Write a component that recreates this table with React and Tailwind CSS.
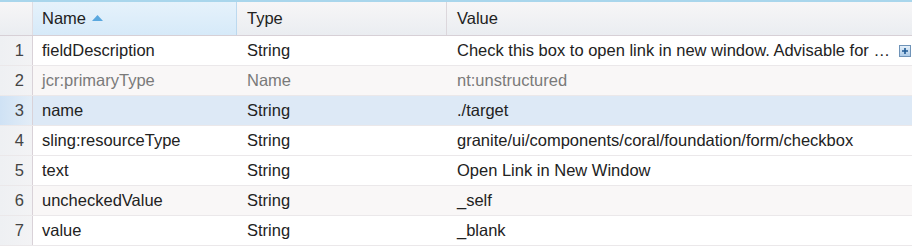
const rows = [
  { n: 1, name: 'fieldDescription', type: 'String', value: 'Check this box to open link in new window. Advisable for …', expand: true },
  { n: 2, name: 'jcr:primaryType', type: 'Name', value: 'nt:unstructured', muted: true },
  { n: 3, name: 'name', type: 'String', value: './target', selected: true },
  { n: 4, name: 'sling:resourceType', type: 'String', value: 'granite/ui/components/coral/foundation/form/checkbox' },
  { n: 5, name: 'text', type: 'String', value: 'Open Link in New Window' },
  { n: 6, name: 'uncheckedValue', type: 'String', value: '_self', alt: true },
  { n: 7, name: 'value', type: 'String', value: '_blank' },
];

function ExpandIcon() {
  return (
    <svg width="12" height="12" viewBox="0 0 12 12" className="shrink-0">
      <defs>
        <linearGradient id="eg" x1="0" y1="0" x2="0" y2="1">
          <stop offset="0" stopColor="#e8f2fb" />
          <stop offset="1" stopColor="#a9c8e6" />
        </linearGradient>
      </defs>
      <rect x="0.5" y="0.5" width="11" height="11" fill="url(#eg)" stroke="#6f93b8" />
      <path d="M6 3v6M3 6h6" stroke="#1f5a94" strokeWidth="1.6" />
    </svg>
  );
}

function Row({ row }) {
  let bg = 'bg-white';
  if (row.selected) bg = 'bg-[#dde9f6]';
  else if (row.muted || row.alt) bg = 'bg-[#f9f7f7]';
  const text = row.muted ? 'text-[#7a7a7a]' : 'text-[#222]';
  return (
    <div className={`flex h-[30px] border-b border-[#ebe8ea] ${bg} ${text}`}>
      <div
        className={`w-[33px] shrink-0 flex items-center justify-end pr-[8px] border-r border-[#d9d2d8] text-[#444] ${
          row.selected ? 'bg-gradient-to-r from-[#cfe2f5] to-[#e3edf7]' : 'bg-gradient-to-r from-[#eef0f3] to-[#f3f3f5]'
        }`}
      >
        {row.n}
      </div>
      <div className="w-[204px] shrink-0 flex items-center pl-[9px]">{row.name}</div>
      <div className="w-[210px] shrink-0 flex items-center pl-[10px]">{row.type}</div>
      <div className="flex-1 min-w-0 flex items-center pl-[10px] pr-[4px] gap-[9px]">
        <span className="whitespace-nowrap">{row.value}</span>
        {row.expand && <ExpandIcon />}
      </div>
    </div>
  );
}

export default function App() {
  return (
    <div className="w-[912px] h-[248px] bg-white overflow-hidden text-[16.5px] font-['Liberation_Sans',Arial,sans-serif]">
      <div className="h-[2px] bg-[#a9d6ec]" />
      <div className="flex h-[34px] border-b border-[#d7d0d6] bg-gradient-to-b from-[#f7f6f7] to-[#eaedf1] text-[#222]">
        <div className="w-[33px] shrink-0 border-r border-[#e0dde2]" />
        <div className="w-[204px] shrink-0 flex items-center pl-[9px] gap-[6px] bg-gradient-to-b from-[#e6f2fb] to-[#d6eaf9] border-r border-[#bcd9ef]">
          Name
          <svg width="11" height="7" viewBox="0 0 11 7">
            <path d="M5.5 0L11 6H0z" fill="#5aa8df" />
          </svg>
        </div>
        <div className="w-[210px] shrink-0 flex items-center pl-[10px] border-r border-[#dcd7dc]">Type</div>
        <div className="flex-1 flex items-center pl-[10px]">Value</div>
      </div>
      {rows.map((r) => (
        <Row key={r.n} row={r} />
      ))}
    </div>
  );
}
